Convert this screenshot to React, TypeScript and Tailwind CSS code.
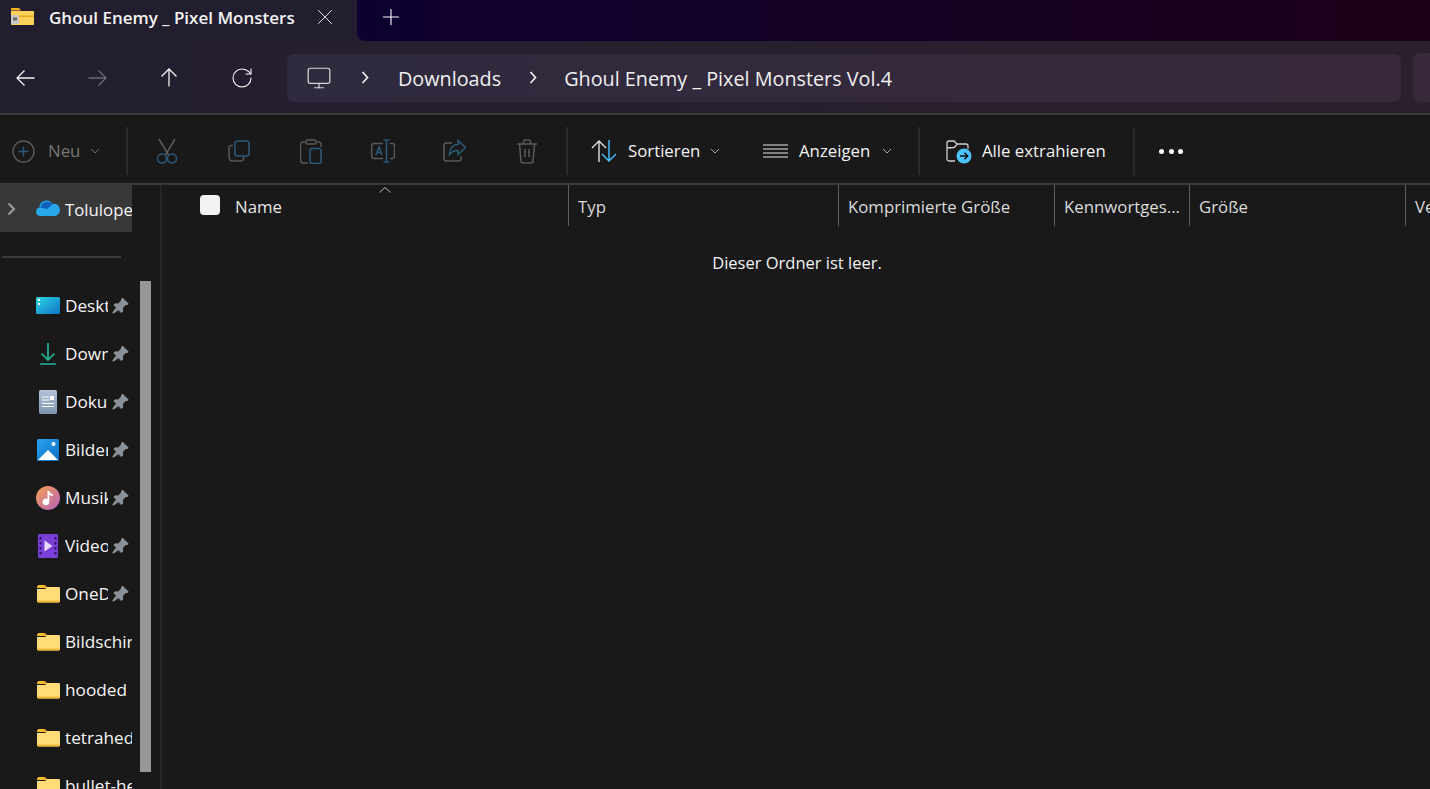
import React from "react";
import { RotateCw, Monitor, X, Plus } from "lucide-react";

const Sep = ({ className = "" }: { className?: string }) => <div className={"w-[2px] h-[48px] bg-[#2b2b2b] shrink-0 " + className} />;

const Chev = ({ className = "" }: { className?: string }) => (
  <svg width="10" height="6" viewBox="0 0 10 6" fill="none" stroke="currentColor" strokeWidth="1" className={className}><path d="M1 1l4 4 4-4" /></svg>
);

const Crumb = ({ className = "" }: { className?: string }) => (
  <svg width="8" height="13" viewBox="0 0 8 13" fill="none" stroke="currentColor" strokeWidth="1.700" className={"shrink-0 " + className}><path d="M1.500 1l5 5.500-5 5.500" /></svg>
);

const Folder = () => (
  <svg width="23" height="18" viewBox="0 0 23 18" className="shrink-0">
    <path d="M0 2c0-1 .6-2 2-2h5c.6 0 1 .2 1.400.6L11 3H0z" fill="#f9b72a" />
    <path d="M0 4l8 0 2.500-2H21.500c.9 0 1.500.6 1.500 1.500V16c0 .9-.6 1.500-1.500 1.500h-20C.6 17.500 0 16.900 0 16z" fill="#ffdc78" />
    <path d="M0 15.800h23v.5c0 .7-.6 1.200-1.500 1.200h-20c-.9 0-1.500-.5-1.500-1.200z" fill="#f3b22c" />
  </svg>
);

const Pin = () => (
  <svg width="17" height="17" viewBox="0 0 16 16" className="shrink-0 -mt-[2px]" fill="#8a9198">
    <path d="M10 .6L15.600 6 14 7.800 12.900 7.600 10.300 10.200 10.500 13.300 8.700 15 1.300 7.600 3 5.800 5.900 6 8.500 3.400 8.300 2.300z" />
    <path d="M4.300 9.300L6.800 11.700 1.500 15.800.2 14.500z" />
  </svg>
);

const icons: Record<string, React.ReactNode> = {
  desk: (
    <svg width="24" height="18" viewBox="0 0 24 18" className="shrink-0">
      <defs><linearGradient id="dk" x1="0" y1="0" x2="1" y2="1"><stop offset="0" stopColor="#2ad4e0" /><stop offset="1" stopColor="#0f74c8" /></linearGradient></defs>
      <rect x="0" y="0" width="24" height="17" rx="1.500" fill="url(#dk)" />
      <rect x="2" y="2" width="2" height="2" fill="#fff" /><rect x="2" y="6" width="2" height="2" fill="#fff" />
    </svg>
  ),
  down: (
    <svg width="18" height="22" viewBox="0 0 18 22" fill="none" stroke="#1fb598" strokeWidth="1.700" className="shrink-0">
      <path d="M9 0v17M2.500 10.500l6.500 6.500 6.500-6.500M1 21h16" />
    </svg>
  ),
  doc: (
    <svg width="18" height="24" viewBox="0 0 18 24" className="shrink-0">
      <defs><linearGradient id="dc" x1="0" y1="0" x2="0" y2="1"><stop offset="0" stopColor="#b4c3da" /><stop offset="1" stopColor="#7d94ae" /></linearGradient></defs>
      <rect width="18" height="24" rx="1.500" fill="url(#dc)" />
      <path d="M3 7h7M3 10h7M3 13.500h12M3 16.500h12" stroke="#fff" strokeWidth="1" />
      <rect x="11" y="6" width="4" height="4" fill="#fff" />
    </svg>
  ),
  pic: (
    <svg width="22" height="22" viewBox="0 0 22 22" className="shrink-0">
      <defs><linearGradient id="pc" x1="0" y1="0" x2="1" y2="1"><stop offset="0" stopColor="#2aa4f0" /><stop offset="1" stopColor="#0b6cc4" /></linearGradient></defs>
      <rect width="22" height="22" rx="1.500" fill="url(#pc)" />
      <circle cx="16.500" cy="5" r="2" fill="#fff" />
      <path d="M1 21l10-10 10 10z" fill="#fff" />
    </svg>
  ),
  mus: (
    <svg width="24" height="24" viewBox="0 0 24 24" className="shrink-0">
      <defs><linearGradient id="ms" x1="0" y1="0" x2="1" y2="1"><stop offset="0" stopColor="#f7a24f" /><stop offset="1" stopColor="#b55fc0" /></linearGradient></defs>
      <circle cx="12" cy="12" r="12" fill="url(#ms)" />
      <path d="M11.500 5h1.800c.2 1.800 1.500 2.800 3.500 3v2c-1.400 0-2.600-.4-3.500-1.200V16a3.400 3.400 0 1 1-1.800-3z" fill="#fff" />
    </svg>
  ),
  vid: (
    <svg width="20" height="24" viewBox="0 0 20 24" className="shrink-0">
      <rect width="20" height="24" rx="1.500" fill="#7a3fd6" />
      <path d="M1.500 3h2v2.500h-2zM1.500 8h2v2.500h-2zM1.500 13h2v2.500h-2zM1.500 18h2v2.500h-2zM16.500 3h2v2.500h-2zM16.500 8h2v2.500h-2zM16.500 13h2v2.500h-2zM16.500 18h2v2.500h-2z" fill="#2c1266" />
      <path d="M6.500 6.500L14.500 12l-8 5.500z" fill="#e8ddff" />
    </svg>
  ),
  folder: <Folder />,
};

const rows = [
  { i: "desk", t: "Desktop", w: "w-[43px]", pin: true },
  { i: "down", t: "Downloads", w: "w-[43px]", pin: true },
  { i: "doc", t: "Dokumente", w: "w-[43px]", pin: true },
  { i: "pic", t: "Bilder", w: "w-[43px]", pin: true },
  { i: "mus", t: "Musik", w: "w-[43px]", pin: true },
  { i: "vid", t: "Videos", w: "w-[43px]", pin: true },
  { i: "folder", t: "OneDrive", w: "w-[43px]", pin: true },
  { i: "folder", t: "Bildschirmfotos", w: "w-[67px]", pin: false },
  { i: "folder", t: "hooded", w: "w-[67px]", pin: false },
  { i: "folder", t: "tetrahedron", w: "w-[67px]", pin: false },
  { i: "folder", t: "bullet-hell", w: "w-[67px]", pin: false },
];

const cols = [
  { t: "Typ", w: "w-[270px]" },
  { t: "Komprimierte Größe", w: "w-[216px]" },
  { t: "Kennwortges...", w: "w-[135px]" },
  { t: "Größe", w: "w-[216px]" },
  { t: "Verhältnis", w: "w-[120px]" },
];

export default function App() {
  return (
    <div className="w-[1430px] h-[789px] overflow-hidden flex flex-col bg-[#191919] text-white text-[16.800px] leading-none" style={{ fontFamily: '"Open Sans","Noto Sans",sans-serif' }}>
      {/* Title / tab strip */}
      <div className="h-[41px] flex shrink-0 bg-[#221e30]">
        <div className="w-[357px] flex items-center shrink-0 pl-[10px] pb-[7px]">
          <svg width="25" height="20" viewBox="0 0 25 20" className="shrink-0">
            <path d="M1 2c0-.6.4-1 1-1h7l2 2.500H1z" fill="#f5b324" />
            <path d="M1 4h22c.6 0 1 .4 1 1v12c0 .6-.4 1-1 1H2c-.6 0-1-.4-1-1z" fill="#fdd25a" />
            <path d="M1 8.500h23v1.500H1z" fill="#e9a91f" />
            <path d="M1 8h8v9H1z" fill="#c8c8c8" />
            <path d="M3 10.500h4v3H3z" fill="#6a6a6a" />
          </svg>
          <span className="ml-[14px] text-[17px] font-semibold whitespace-nowrap text-[#f3f3f3]">Ghoul Enemy _ Pixel Monsters</span>
          <X size={26} strokeWidth={0.800} className="ml-[17px] shrink-0" />
        </div>
        <div className="flex-1 rounded-bl-[8px] bg-linear-to-r from-[#0e0030] to-[#1c0018] flex items-center pl-[21px] pb-[7px]">
          <Plus size={26} strokeWidth={1} />
        </div>
      </div>

      {/* Nav bar */}
      <div className="h-[72px] flex items-center shrink-0 bg-linear-to-r from-[#221e30] to-[#2c1f2c] pl-[16px] pt-[1px]">
        <svg width="19" height="18" viewBox="0 0 19 18" fill="none" stroke="#f2f2f2" strokeWidth="1.300" className="shrink-0"><path d="M18.500 9H1M8.500 1.500L1 9l7.500 7.500" /></svg>
        <svg width="19" height="18" viewBox="0 0 19 18" fill="none" stroke="#6e6b77" strokeWidth="1.300" className="shrink-0 ml-[53px]"><path d="M.5 9H18M10.500 1.500L18 9l-7.500 7.500" /></svg>
        <svg width="18" height="19" viewBox="0 0 18 19" fill="none" stroke="#f2f2f2" strokeWidth="1.300" className="shrink-0 ml-[53px]"><path d="M9 18.500V1M1.500 8.500L9 1l7.500 7.500" /></svg>
        <RotateCw size={24} strokeWidth={1.050} className="shrink-0 ml-[52px]" />
        <div className="ml-[33px] w-[1114px] h-[48px] rounded-[7px] bg-linear-to-r from-[#2f2a3e] to-[#38293a] flex items-center pl-[19px] shrink-0 text-[#f0f0f0]">
          <Monitor size={26} strokeWidth={1.150} className="shrink-0 text-[#d8d8d8]" />
          <Crumb className="ml-[29px]" />
          <span className="ml-[29px] mt-[2px] text-[19.800px] whitespace-nowrap">Downloads</span>
          <Crumb className="ml-[28px]" />
          <span className="ml-[27px] mt-[2px] text-[19.800px] whitespace-nowrap">Ghoul Enemy _ Pixel Monsters Vol.4</span>
        </div>
        <div className="ml-[12px] flex-1 h-[49px] rounded-l-[7px] bg-[#38293a]" />
      </div>

      {/* Toolbar */}
      <div className="h-[72px] shrink-0 flex items-center bg-[#191919] border-y-2 border-[#3a3a3a] pl-[12px] pt-[4px]">
        <svg width="23" height="23" viewBox="0 0 23 23" fill="none" className="shrink-0">
          <circle cx="11.500" cy="11.500" r="10.500" stroke="#5a5a5a" strokeWidth="1.400" />
          <path d="M11.500 6.500v10M6.500 11.500h10" stroke="#2c5a78" strokeWidth="1.400" />
        </svg>
        <span className="ml-[13px] w-[32px] text-[#777777]">Neu</span>
        <Chev className="ml-[10px] text-[#6a6a6a] shrink-0" />
        <Sep className="ml-[26px]" />
        <div className="w-[72px] ml-[3px] flex justify-center shrink-0">
          <svg width="22" height="26" viewBox="0 0 22 26" fill="none" strokeWidth="1.500">
            <path d="M3 1l9.500 16M19 1L9.500 17" stroke="#5a5a5a" />
            <circle cx="6" cy="20.500" r="4.500" stroke="#2c5a78" />
            <circle cx="16" cy="20.500" r="4.500" stroke="#2c5a78" />
          </svg>
        </div>
        <div className="w-[72px] flex justify-center shrink-0">
          <svg width="22" height="22" viewBox="0 0 22 22" fill="none" strokeWidth="1.500">
            <path d="M5 5.500H3.500A2.500 2.500 0 0 0 1 8v9.500A3.500 3.500 0 0 0 4.500 21H13a2.500 2.500 0 0 0 2.500-2.500V17" stroke="#5a5a5a" />
            <rect x="7" y="1" width="14" height="15" rx="2.500" stroke="#2c5a78" />
          </svg>
        </div>
        <div className="w-[72px] flex justify-center shrink-0">
          <svg width="22" height="25" viewBox="0 0 22 25" fill="none" strokeWidth="1.500">
            <path d="M5 3H3a2.500 2.500 0 0 0-2.500 2.500v16A2.500 2.500 0 0 0 3 24h5M17 3h2a2.500 2.500 0 0 1 2 2v3" stroke="#5a5a5a" />
            <rect x="6" y="1" width="10" height="4" rx="1.500" stroke="#5a5a5a" />
            <rect x="10" y="9.500" width="11" height="15" rx="2.500" stroke="#2c5a78" />
          </svg>
        </div>
        <div className="w-[72px] flex justify-center shrink-0">
          <svg width="24" height="24" viewBox="0 0 24 24" fill="none" strokeWidth="1.500">
            <path d="M12 4.500H3A2.500 2.500 0 0 0 .7 7v10A2.500 2.500 0 0 0 3 19.500h9M19 4.500h2.500A2 2 0 0 1 23.500 7v10a2.500 2.500 0 0 1-2.500 2.500H19" stroke="#5a5a5a" />
            <path d="M12.500 1h3m3 0h-3v22h3m-6 0h3M5 16l3-8 3 8M6 13.500h4" stroke="#2c5a78" />
          </svg>
        </div>
        <div className="w-[72px] flex justify-center shrink-0">
          <svg width="24" height="24" viewBox="0 0 24 24" fill="none" strokeWidth="1.500">
            <path d="M9 4H3.500A2.500 2.500 0 0 0 1 6.500v13A2.500 2.500 0 0 0 3.500 22h12a2.500 2.500 0 0 0 2.500-2.500V17" stroke="#5a5a5a" />
            <path d="M15 1.500l7.500 7-7.500 7v-4c-4 0-6.500 1-8.500 4 0-6 3.500-10 8.500-10z" stroke="#2c5a78" />
          </svg>
        </div>
        <div className="w-[72px] flex justify-center shrink-0">
          <svg width="22" height="25" viewBox="0 0 22 25" fill="none" stroke="#5a5a5a" strokeWidth="1.500">
            <path d="M1 5h20M7.500 5V3a2 2 0 0 1 2-2h3a2 2 0 0 1 2 2v2M3.500 5l1.500 17a2 2 0 0 0 2 2h8a2 2 0 0 0 2-2l1.500-17M9 10v8M13 10v8" />
          </svg>
        </div>
        <Sep className="ml-[3px]" />
        <svg width="26" height="24" viewBox="0 0 26 24" fill="none" strokeWidth="1.400" className="ml-[23px] shrink-0">
          <path d="M8 23V2M1 9l7-7 7 7" stroke="#e0e0e0" />
          <path d="M18 1v21M11 15l7 7 7-7" stroke="#4cc2ff" />
        </svg>
        <span className="ml-[11px] w-[72px] text-[#f2f2f2]">Sortieren</span>
        <Chev className="ml-[10px] text-[#a8a8a8] shrink-0" />
        <svg width="25" height="16" viewBox="0 0 25 16" stroke="#e8e8e8" strokeWidth="1.200" className="ml-[43px] shrink-0">
          <path d="M0 2h25M0 6h25M0 10h25M0 14h25" />
        </svg>
        <span className="ml-[11px] w-[74px] text-[#f2f2f2]">Anzeigen</span>
        <Chev className="ml-[9px] text-[#a8a8a8] shrink-0" />
        <Sep className="ml-[26px]" />
        <svg width="26" height="26" viewBox="0 0 26 26" fill="none" className="ml-[26px] shrink-0">
          <path d="M9 23H3a2 2 0 0 1-2-2V5a2 2 0 0 1 2-2h5l3 3h9a2 2 0 0 1 2 2v3M1 10l7-.5 3-3" stroke="#d0d0d0" strokeWidth="1.300" />
          <circle cx="18" cy="18" r="7.500" fill="#4cc2ff" />
          <path d="M14 18h7.500M18.500 14.800L21.700 18l-3.200 3.200" stroke="#111" strokeWidth="1.500" />
        </svg>
        <span className="ml-[10px] w-[124px] text-[#f2f2f2] whitespace-nowrap">Alle extrahieren</span>
        <Sep className="ml-[27px]" />
        <div className="ml-[24px] flex gap-[4.500px] shrink-0">
          <span className="w-[5px] h-[5px] rounded-full bg-white" />
          <span className="w-[5px] h-[5px] rounded-full bg-white" />
          <span className="w-[5px] h-[5px] rounded-full bg-white" />
        </div>
      </div>

      {/* Body */}
      <div className="flex-1 flex min-h-0">
        {/* Sidebar */}
        <div className="w-[162px] shrink-0 border-r-2 border-[#262626] relative overflow-hidden text-[17.200px]">
          <div className="w-[132px] h-[47px] bg-[#383838] flex items-center overflow-hidden pt-[4px]">
            <svg width="9" height="14" viewBox="0 0 9 14" fill="none" stroke="#9a9a9a" strokeWidth="2.200" className="ml-[7px] shrink-0 -mt-[4px]"><path d="M1.500 1.500L7 7l-5.500 5.500" /></svg>
            <svg width="24" height="16" viewBox="0 0 24 16" className="ml-[20px] shrink-0 -mt-[5px]">
              <path d="M4.500 16a4.300 4.300 0 0 1-1-8.500A7 7 0 0 1 16.500 4 6 6 0 0 1 24 10c0 3.300-2.500 6-6 6z" fill="#28a8ea" />
              <path d="M4.500 7.500A7 7 0 0 1 16.500 4l-5 5z" fill="#0f5fb8" />
            </svg>
            <span className="ml-[5px] whitespace-nowrap text-[16.800px] text-[#f5f5f5]">Tolulope</span>
          </div>
          <div className="h-[2px] w-[119px] ml-[2px] mt-[24px] bg-[#3a3a3a]" />
          <div className="mt-[24px]">
            {rows.map((r, idx) => (
              <div key={idx} className="h-[48px] flex items-center pl-[36px]">
                <div className="w-[24px] flex justify-center shrink-0">{icons[r.i]}</div>
                <span className={"ml-[5px] overflow-hidden whitespace-nowrap shrink-0 text-[#f5f5f5] " + r.w}>{r.t}</span>
                {r.pin && <div className="ml-[4px]"><Pin /></div>}
              </div>
            ))}
          </div>
          <div className="absolute left-[140px] top-[96px] w-[11px] h-[491px] bg-[#979797]" />
        </div>

        {/* Details */}
        <div className="flex-1 min-w-0 relative">
          <svg width="12" height="6" viewBox="0 0 12 6" fill="none" stroke="#b8b8b8" strokeWidth="1" className="absolute left-[217px] top-[2px]"><path d="M.5 5.500L6 .5l5.500 5" /></svg>
          <div className="h-[41px] flex">
            <div className="w-[407px] flex items-center shrink-0 pl-[38px] pt-[4px] border-r border-[#5e5e5e]">
              <span className="w-[20px] h-[20px] -mt-[6px] rounded-[4px] bg-[#f3f3f3] shrink-0" />
              <span className="ml-[15px] text-[#e6e6e6]">Name</span>
            </div>
            {cols.map((c) => (
              <div key={c.t} className={"flex items-center pl-[9px] pt-[4px] border-r border-[#5e5e5e] shrink-0 whitespace-nowrap overflow-hidden text-[#dcdcdc] " + c.w}>{c.t}</div>
            ))}
          </div>
          <div className="w-[1270px] text-center mt-[29px] text-[16.500px] text-[#f2f2f2]">Dieser Ordner ist leer.</div>
        </div>
      </div>
    </div>
  );
}
